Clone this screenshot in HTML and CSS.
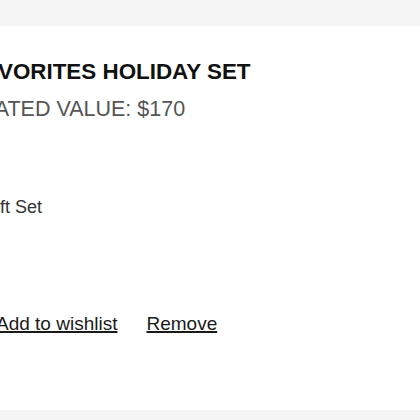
FILE: index.html
```html
<!DOCTYPE html>
<html>
<head>
<meta charset="utf-8">
<link rel="stylesheet" href="styles.css">
</head>
<body>
<div class="band band-top"></div>
<div class="item">
  <div class="details">
    <h2 class="title">FAVORITES HOLIDAY SET</h2>
    <p class="value">ESTIMATED VALUE: $170</p>
    <p class="type">Gift Set</p>
    <div class="actions">
      <a class="link link-wish" href="#">Add to wishlist</a>
      <a class="link" href="#">Remove</a>
    </div>
  </div>
</div>
<div class="band band-bottom"></div>
</body>
</html>
```
FILE: styles.css
```css
html, body {
  margin: 0;
  padding: 0;
  background: #ffffff;
  font-family: "Liberation Sans", Arial, sans-serif;
  overflow: hidden;
}
.band {
  background: #f5f5f5;
}
.band-top {
  height: 26px;
}
.band-bottom {
  height: 20px;
}
.item {
  box-sizing: border-box;
  height: 384px;
  padding-top: 33px;
  background: #ffffff;
  overflow: hidden;
}
.details {
  display: flex;
  flex-direction: column;
  align-items: flex-start;
}
.title {
  margin: 0 0 0 -29px;
  font-size: 22.4px;
  line-height: 26px;
  font-weight: bold;
  color: #111111;
  white-space: nowrap;
}
.value {
  margin: 11px 0 0 -71px;
  font-size: 21.5px;
  line-height: 26px;
  color: #555555;
  white-space: nowrap;
}
.type {
  margin: 74px 0 0 -18px;
  font-size: 18px;
  line-height: 22px;
  color: #333333;
  white-space: nowrap;
}
.actions {
  margin: 94px 0 0 -4px;
  display: flex;
  gap: 29px;
}
.link {
  font-size: 19px;
  line-height: 24px;
  color: #1a1a1a;
  text-decoration: underline;
  text-decoration-thickness: 1.5px;
  white-space: nowrap;
}
```
